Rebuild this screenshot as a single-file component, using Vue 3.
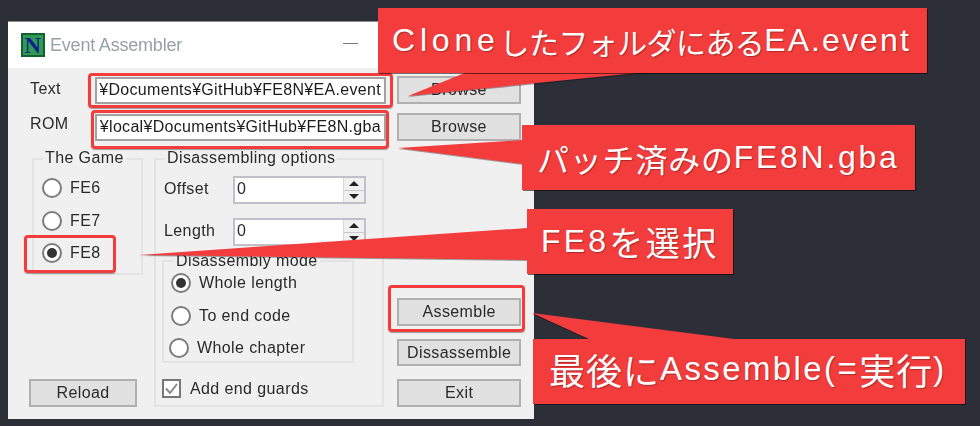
<script setup>
const games = [
  { label: 'FE6', on: false },
  { label: 'FE7', on: false },
  { label: 'FE8', on: true },
]
const modes = [
  { label: 'Whole length', on: true },
  { label: 'To end code', on: false },
  { label: 'Whole chapter', on: false },
]
</script>

<template>
  <div class="page">
    <div class="window">
      <header class="titlebar">
        <svg class="app-icon" width="24" height="24" viewBox="0 0 24 24">
          <rect width="24" height="24" fill="#14602e" />
          <rect x="2" y="2" width="20" height="20" fill="#2f9a55" />
          <text x="12" y="20" text-anchor="middle" class="icon-n">N</text>
        </svg>
        <span class="title">Event Assembler</span>
        <span class="minimize"></span>
      </header>

      <div class="body">
        <div class="path-row">
          <span class="label">Text</span>
          <div class="field"><span>¥Documents¥GitHub¥FE8N¥EA.event</span></div>
          <button class="btn">Browse</button>
        </div>
        <div class="path-row second">
          <span class="label">ROM</span>
          <div class="field"><span>¥local¥Documents¥GitHub¥FE8N.gba</span></div>
          <button class="btn">Browse</button>
        </div>

        <div class="main">
          <div class="left">
            <div class="group game">
              <span class="legend">The Game</span>
              <div v-for="g in games" :key="g.label" class="radio-row">
                <span class="radio" :class="{ on: g.on }"></span>
                <span>{{ g.label }}</span>
              </div>
            </div>
            <button class="btn reload">Reload</button>
          </div>

          <div class="group options">
            <span class="legend">Disassembling options</span>
            <div class="spin-row">
              <span class="spin-label">Offset</span>
              <div class="spin">
                <span>0</span>
                <span class="arrows"><i class="up"></i><i class="down"></i></span>
              </div>
            </div>
            <div class="spin-row">
              <span class="spin-label">Length</span>
              <div class="spin">
                <span>0</span>
                <span class="arrows"><i class="up"></i><i class="down"></i></span>
              </div>
            </div>
            <div class="group mode">
              <span class="legend">Disassembly mode</span>
              <div v-for="m in modes" :key="m.label" class="radio-row">
                <span class="radio" :class="{ on: m.on }"></span>
                <span>{{ m.label }}</span>
              </div>
            </div>
            <div class="check-row">
              <svg class="check" width="19" height="19" viewBox="0 0 19 19">
                <rect x="1" y="1" width="17" height="17" fill="#fff" stroke="#777" stroke-width="2" />
                <path d="M4 9.5 L8 14 L15 5" fill="none" stroke="#8a8a8a" stroke-width="2" />
              </svg>
              <span>Add end guards</span>
            </div>
          </div>

          <div class="right">
            <button class="btn">Assemble</button>
            <button class="btn">Dissassemble</button>
            <button class="btn">Exit</button>
          </div>
        </div>
      </div>
    </div>

    <span class="frame f-text"></span>
    <span class="frame f-rom"></span>
    <span class="frame f-fe8"></span>
    <span class="frame f-asm"></span>

    <svg class="tails" width="980" height="426" viewBox="0 0 980 426">
      <polygon points="467,72 408,96 647,72" />
      <polygon points="523,140 398,148 523,164" />
      <polygon points="527,228 139,255 527,260" />
      <polygon points="591,340 532,313 742,340" />
    </svg>

    <div class="callout c1"><span class="wide">Clone</span><span class="jp">したフォルダにある</span><span class="lat">EA.event</span></div>
    <div class="callout c2"><span class="jp">パッチ済みの</span><span class="lat">FE8N.gba</span></div>
    <div class="callout c3"><span class="lat">FE8</span><span class="jp">を選択</span></div>
    <div class="callout c4"><span class="jp">最後に</span><span class="lat">Assemble(=</span><span class="jp">実行</span><span class="lat">)</span></div>
  </div>
</template>

<style>
html, body { margin: 0; background: #2c2f38; }
</style>

<style scoped>
.page {
  position: relative;
  width: 980px;
  height: 426px;
  box-sizing: border-box;
  padding: 21px 0 0 8px;
  background: #2c2f38;
  overflow: hidden;
  font-family: "Liberation Sans", "Noto Sans CJK JP", sans-serif;
}
.window {
  width: 526px;
  height: 398px;
  box-sizing: border-box;
  border-top: 1px solid #8c8c8c;
  background: #f0f0f0;
  color: #2a2a2a;
  font-size: 16px;
  letter-spacing: 0.4px;
  filter: blur(0.35px);
}
.titlebar {
  height: 46px;
  box-sizing: border-box;
  background: #fff;
  display: flex;
  align-items: center;
  padding: 0 0 0 13px;
}
.icon-n { font: bold 23px "Liberation Serif", serif; fill: #10208c; }
.title {
  margin-left: 5px;
  font-size: 18px;
  letter-spacing: -0.2px;
  color: #98a0a8;
  width: 293px;
  white-space: nowrap;
}
.minimize { width: 15px; height: 1px; background: #777; margin-top: -3px; }

.body { padding: 8px 13px 11px 21px; }
.path-row {
  display: grid;
  grid-template-columns: 66px 291px 135px;
  align-items: center;
  height: 28px;
}
.path-row .btn { margin-left: 11px; width: 124px; }
.path-row.second { margin-top: 9px; }
.label { padding-left: 1px; margin-top: -3px; }
.second .label { margin-top: -7px; }
.field {
  height: 27px;
  box-sizing: border-box;
  border: 2px solid #a2a2a2;
  background: #fff;
  display: flex;
  justify-content: flex-end;
  align-items: center;
  overflow: hidden;
  white-space: nowrap;
  padding-right: 3px;
  color: #1c1c1c;
  letter-spacing: 0.31px;
}
.btn {
  box-sizing: border-box;
  height: 28px;
  border: 2px solid #b0b0b0;
  background: #e1e1e1;
  padding: 0;
  font: inherit;
  letter-spacing: inherit;
  color: #2a2a2a;
}

.main {
  display: flex;
  height: 249px;
  margin-top: 17px;
}
.left {
  width: 114px;
  display: flex;
  flex-direction: column;
  justify-content: space-between;
}
.group {
  position: relative;
  box-sizing: border-box;
  border: 2px solid #e3e3e3;
}
.legend {
  position: absolute;
  top: -12px;
  left: 9px;
  padding: 0 2px;
  background: #f0f0f0;
  white-space: nowrap;
  line-height: 20px;
}
.game {
  margin: 0 0 0 3px;
  width: 111px;
  height: 117px;
  padding: 18px 0 0 8px;
}
.radio-row {
  display: flex;
  align-items: center;
  gap: 8px;
  height: 20px;
  margin-bottom: 12.5px;
}
.radio {
  position: relative;
  width: 20px;
  height: 20px;
  box-sizing: border-box;
  border: 2px solid #7c7c7c;
  border-radius: 50%;
  background: #fff;
  flex: none;
}
.radio.on::after {
  content: "";
  position: absolute;
  inset: 3px;
  border-radius: 50%;
  background: #333;
}
.reload { width: 108px; }

.options {
  width: 231px;
  margin-left: 11px;
  padding: 16px 0 0 8px;
}
.spin-row {
  display: grid;
  grid-template-columns: 69px 133px;
  align-items: center;
  height: 28px;
  margin-bottom: 14px;
}
.spin-label { margin-top: -2px; }
.spin {
  height: 28px;
  box-sizing: border-box;
  border: 2px solid #c0c0c8;
  background: #fff;
  display: flex;
  justify-content: space-between;
  padding-left: 2px;
  line-height: 22px;
}
.arrows {
  width: 20px;
  display: flex;
  flex-direction: column;
  background: #f0f0f0;
  border-left: 1px solid #d8d8d8;
}
.arrows i {
  flex: 1;
  display: flex;
  align-items: center;
  justify-content: center;
}
.arrows i + i { border-top: 1px solid #c8c8c8; }
.arrows i::before {
  content: "";
  border-left: 5px solid transparent;
  border-right: 5px solid transparent;
}
.up::before { border-bottom: 5px solid #222; }
.down::before { border-top: 5px solid #222; }

.mode {
  width: 192px;
  height: 103px;
  margin: 7px 0 0 -2px;
  padding: 11px 0 0 7px;
}
.mode .legend { top: -11px; left: 10px; }
.mode .radio-row:last-child { margin-left: -2px; }
.check-row {
  display: flex;
  align-items: center;
  gap: 9px;
  height: 19px;
  margin: 16px 0 0 -2px;
}
.check { flex: none; }

.right {
  width: 124px;
  margin-left: 13px;
  padding-top: 140px;
  display: flex;
  flex-direction: column;
  gap: 13px;
}

.frame {
  position: absolute;
  box-sizing: border-box;
  border: 3.5px solid #f33c3c;
  border-radius: 4px;
  box-shadow: 0 1px 1px rgba(0, 0, 0, 0.35);
}
.f-text { left: 88px; top: 73px; width: 305px; height: 35px; }
.f-rom { left: 91px; top: 110px; width: 298px; height: 39px; }
.f-fe8 { left: 24px; top: 235px; width: 92px; height: 38px; }
.f-asm { left: 388px; top: 285px; width: 137px; height: 47px; }

.tails { position: absolute; left: 0; top: 0; filter: drop-shadow(0 1px 0 rgba(0,0,0,.35)); }
.tails polygon { fill: #f33c3c; }

.callout {
  position: absolute;
  height: 65px;
  box-sizing: border-box;
  display: flex;
  align-items: center;
  background: #f33c3c;
  color: #fff;
  white-space: nowrap;
  box-shadow: 1px 1px 0 rgba(0, 0, 0, 0.55);
  text-shadow: 1px 1px 1px rgba(0, 0, 0, 0.3);
}
.lat { font: 32px "Liberation Sans", sans-serif; letter-spacing: 2.1px; }
.wide { font: 32px "Liberation Sans", sans-serif; letter-spacing: 4.8px; }
.jp { font: 30px "Noto Sans CJK JP", sans-serif; letter-spacing: -0.6px; }
.c1 { left: 378px; top: 8px; width: 549px; padding-left: 14px; }
.c2 { left: 522px; top: 125px; width: 393px; padding-left: 15px; }
.c2 .jp { font-size: 32px; letter-spacing: 0.8px; }
.c2 .lat { letter-spacing: 2.7px; }
.c3 { left: 527px; top: 209px; width: 206px; padding-left: 14px; }
.c3 .lat { letter-spacing: 3.2px; }
.c3 .jp { font-size: 34px; letter-spacing: 2.5px; }
.c4 { left: 533px; top: 339px; width: 432px; padding: 0 0 5px 16px; }
.c4 .jp { font-size: 36px; letter-spacing: 1px; }
.c4 .lat { font-size: 33px; letter-spacing: 2.4px; }
</style>
